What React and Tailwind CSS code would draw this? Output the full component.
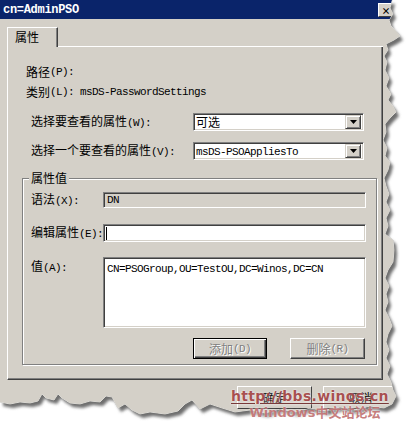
import React from "react";

const L = ({ children }) => (
  <span className="font-['Liberation_Mono',monospace] text-[11px] tracking-[-0.6px]">{children}</span>
);

const sunken =
  "border border-t-[#808080] border-l-[#808080] border-r-white border-b-white shadow-[inset_1px_1px_0_#404040,inset_-1px_-1px_0_#d4d0c8]";

const Combo = ({ children }) => (
  <div className={`w-[171px] h-[18px] bg-white flex items-center justify-between pl-[2px] pr-[2px] ${sunken}`}>
    <div className="leading-[14px] whitespace-nowrap">{children}</div>
    <div className="w-[16px] h-[14px] bg-[#d4d0c8] border border-t-[#d4d0c8] border-l-[#d4d0c8] border-r-[#404040] border-b-[#404040] shadow-[inset_1px_1px_0_#fff,inset_-1px_-1px_0_#808080] flex items-center justify-center">
      <svg width="7" height="4" viewBox="0 0 7 4"><polygon points="0,0 7,0 3.5,4" fill="#000" /></svg>
    </div>
  </div>
);

const paper =
  "0,0 392,0 390,8 393,14 389,20 391,26 396,31 400,36 394,40 386,44 388,50 384,56 387,62 385,70 389,78 386,86 391,94 388,100 393,106 396,112 390,118 385,124 386,132 383,140 387,148 385,156 390,162 388,170 384,178 386,186 389,194 386,202 390,210 386,218 388,226 385,234 393,240 394,250 393,262 388,270 385,278 389,286 386,294 388,302 385,310 389,318 392,326 388,334 386,342 389,350 386,358 390,366 387,374 391,382 393,390 396,396 392,404 384,408 370,406 355,410 340,407 325,411 310,408 295,412 280,409 265,413 250,410 235,412 222,408 210,404 200,409 192,400 185,404 178,411 165,414 150,412 140,414 132,410 125,404 118,408 112,397 106,396 100,402 90,401 80,404 70,403 62,398 58,394 54,400 46,398 42,394 38,401 30,403 20,402 10,404 0,402";

export default function App() {
  return (
    <div className="relative w-[408px] h-[424px] bg-white overflow-hidden font-['Noto_Sans_CJK_SC',sans-serif] text-[12px] leading-[16px] text-black whitespace-nowrap">
      <div className="w-[402px] h-[424px] bg-[#d4d0c8] flex flex-col">
        {/* title bar */}
        <div className="h-[19px] bg-[#0a246a] flex items-center pl-[3px] relative">
          <span className="font-['Liberation_Mono',monospace] font-bold text-[12px] tracking-[-0.3px] text-white">cn=AdminPSO</span>
          <div className="absolute left-[378px] top-[3px] w-[16px] h-[14px] bg-[#d4d0c8] border border-t-white border-l-white border-r-[#404040] border-b-[#404040] flex items-center justify-center text-[9px] leading-none font-bold">×</div>
        </div>

        <div className="pl-[7px] pt-[8px]">
          {/* tab row */}
          <div className="flex h-[20px] w-[376px]">
            <div className="w-[51px] h-[20px] border-l border-t border-l-white border-t-white border-r border-r-[#404040] shadow-[inset_-1px_0_0_#808080] pl-[7px] pt-[1px] leading-[16px]">属性</div>
            <div className="flex-1 border-b border-b-white" />
          </div>

          {/* panel */}
          <div className="w-[376px] h-[333px] border-l border-l-white border-r border-r-[#404040] border-b border-b-[#404040] shadow-[inset_-1px_-1px_0_#808080] pl-[14px] pt-[17px] flex flex-col">
            <div className="h-[16px] ml-[4px] flex items-center">路径<L>(P):</L></div>
            <div className="h-[16px] ml-[4px] mt-[4px] flex items-center">类别<L>(L): msDS-PasswordSettings</L></div>

            <div className="ml-[9px] mt-[13px] flex items-center">
              <div className="w-[162px] shrink-0">选择要查看的属性<L>(W):</L></div>
              <Combo>可选</Combo>
            </div>
            <div className="ml-[9px] mt-[11px] flex items-center">
              <div className="w-[162px] shrink-0">选择一个要查看的属性<L>(V):</L></div>
              <Combo><L>msDS-PSOAppliesTo</L></Combo>
            </div>

            {/* group box */}
            <div className="relative mt-[18px] w-[355px] h-[187px] border border-[#808080] shadow-[inset_1px_1px_0_#fff,1px_1px_0_#fff] pt-[12px] pl-[8px] flex flex-col">
              <div className="absolute left-[6px] top-[-9px] px-[2px] bg-[#d4d0c8] leading-[16px]">属性值</div>

              <div className="flex items-center">
                <div className="w-[72px] shrink-0">语法<L>(X):</L></div>
                <div className={`w-[263px] h-[16px] bg-[#d4d0c8] pl-[3px] flex items-center ${sunken}`}><L>DN</L></div>
              </div>
              <div className="flex items-center mt-[15px]">
                <div className="w-[72px] shrink-0">编辑属性<L>(E):</L></div>
                <div className={`w-[263px] h-[18px] bg-white pl-[2px] flex items-center ${sunken}`}>
                  <div className="w-px h-[13px] bg-black" />
                </div>
              </div>
              <div className="flex items-start mt-[15px]">
                <div className="w-[72px] shrink-0 pt-[1px]">值<L>(A):</L></div>
                <div className={`w-[263px] h-[71px] bg-white pl-[3px] pt-[1px] ${sunken}`}>
                  <L>CN=PSOGroup,OU=TestOU,DC=Winos,DC=CN</L>
                </div>
              </div>
              <div className="flex mt-[10px] ml-[162px] gap-[23px]">
                <div className="w-[74px] h-[21px] border border-black shadow-[inset_1px_1px_0_#fff,inset_-1px_-1px_0_#404040,inset_-2px_-2px_0_#808080] flex items-center justify-center text-[#808080] [text-shadow:1px_1px_0_#fff]">
                  添加<L>(D)</L>
                </div>
                <div className="w-[75px] h-[21px] border border-t-white border-l-white border-r-[#404040] border-b-[#404040] shadow-[inset_-1px_-1px_0_#808080] flex items-center justify-center text-[#808080] [text-shadow:1px_1px_0_#fff]">
                  删除<L>(R)</L>
                </div>
              </div>
            </div>
          </div>

          {/* bottom buttons */}
          <div className="flex mt-[6px] ml-[230px] gap-[11px]">
            <div className="w-[75px] h-[23px] border border-t-white border-l-white border-r-[#404040] border-b-[#404040] flex items-center justify-center">确定</div>
            <div className="w-[75px] h-[23px] border border-t-white border-l-white border-r-[#404040] border-b-[#404040] flex items-center justify-center">取消</div>
          </div>
        </div>
      </div>

      {/* torn edge overlay */}
      <svg className="absolute inset-0 pointer-events-none" width="408" height="424" viewBox="0 0 408 424">
        <defs>
          <mask id="outside" maskUnits="userSpaceOnUse" x="0" y="0" width="408" height="424">
            <rect x="0" y="0" width="408" height="424" fill="white" />
            <polygon points={paper} fill="black" />
          </mask>
          <filter id="blur" x="-10%" y="-10%" width="120%" height="120%">
            <feGaussianBlur stdDeviation="1.6" />
          </filter>
        </defs>
        <rect x="0" y="0" width="408" height="424" fill="white" mask="url(#outside)" />
        <g mask="url(#outside)">
          <polygon points={paper} transform="translate(3,4)" fill="#6e6e6e" filter="url(#blur)" />
          <polygon points={paper} fill="none" stroke="#c8c6c0" strokeWidth="1" />
        </g>
      </svg>

      {/* watermark */}
      <div className="absolute left-[231px] top-[388px] flex flex-col items-center pointer-events-none font-['DejaVu_Sans','Noto_Sans_CJK_SC',sans-serif] [text-shadow:0_0_2px_#fff]">
        <div className="font-bold text-[14px] leading-[16px] tracking-[0.3px] text-[#9a3232]/85 underline decoration-[#7a3a3a] decoration-1 underline-offset-[2px]">http://bbs.winos.cn</div>
        <div className="font-bold text-[13px] leading-[17px] text-[#b85c5c]/80 ml-[10px]">Windows中文站论坛</div>
      </div>
    </div>
  );
}
